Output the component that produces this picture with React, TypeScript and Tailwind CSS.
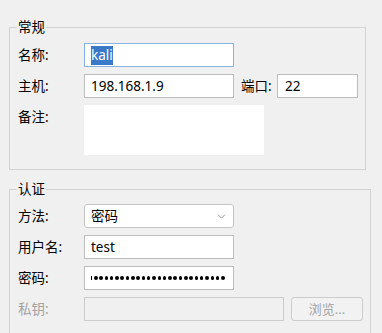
import { ChevronDown } from 'lucide-react';

const font = { fontFamily: '"Noto Sans", "Noto Sans CJK SC", sans-serif' };

function Row({ label, disabled, children }: { label: string; disabled?: boolean; children: React.ReactNode }) {
  return (
    <div className="flex items-center h-[24px]">
      <span className={`w-[67px] pl-[1px] ${disabled ? 'text-[#a3a3a3]' : 'text-black'}`}>{label}</span>
      {children}
    </div>
  );
}

function Field({ value, width, focused }: { value?: React.ReactNode; width: string; focused?: boolean }) {
  return (
    <div
      className={`${width} h-[24px] bg-white border flex items-center pl-[6px] ${
        focused ? 'border-[#86b3e3]' : 'border-[#bdbdbd]'
      }`}
    >
      {value}
    </div>
  );
}

export default function App() {
  const dots = Array.from({ length: 25 });

  return (
    <div className="w-[382px] h-[333px] bg-[#f0f0f0] overflow-hidden text-[13.5px] leading-[16px]" style={font}>
      <div className="pl-[9px] pt-[19px] flex flex-col gap-[11px]">
        {/* 常规 */}
        <fieldset className="w-[356px] border border-[#d3d3d3] px-[7px] pb-[14px]">
          <legend className="ml-0 px-[1px] h-[16px] leading-[16px]">常规</legend>
          <div className="flex flex-col gap-[7px] pt-[8px]">
            <Row label="名称:">
              <Field
                width="w-[150px]"
                focused
                value={<span className="bg-[#3a78c8] text-white leading-[19px]">kali</span>}
              />
            </Row>
            <Row label="主机:">
              <Field width="w-[150px]" value="198.168.1.9" />
              <span className="ml-[7px] w-[36px]">端口:</span>
              <div className="w-[81px] h-[24px] bg-white border border-[#bdbdbd] flex items-center pl-[7px]">22</div>
            </Row>
            <div className="flex items-start h-[50px]">
              <span className="w-[67px] pl-[1px] pt-[4px]">备注:</span>
              <div className="w-[180px] h-[50px] bg-white" />
            </div>
          </div>
        </fieldset>

        {/* 认证 */}
        <fieldset className="w-[362px] h-[170px] border border-[#d3d3d3] px-[7px]">
          <legend className="ml-0 px-[1px] h-[16px] leading-[16px]">认证</legend>
          <div className="flex flex-col gap-[7px] pt-[7px]">
            <Row label="方法:">
              <div className="w-[150px] h-[24px] bg-white border border-[#c4c4c4] rounded-[3px] flex items-center justify-between pl-[6px] pr-[5px]">
                <span>密码</span>
                <ChevronDown size={13} strokeWidth={1.2} className="text-[#5a5a5a]" />
              </div>
            </Row>
            <Row label="用户名:">
              <Field width="w-[150px]" value="test" />
            </Row>
            <Row label="密码:">
              <Field
                width="w-[150px]"
                value={
                  <span className="flex items-center">
                    <span className="w-[1px] h-[4px] bg-black mr-[2px]" />
                    {dots.map((_, i) => (
                      <span key={i} className="w-[3.5px] h-[3.5px] rounded-full bg-black mr-[1.8px]" />
                    ))}
                  </span>
                }
              />
            </Row>
            <Row label="私钥:" disabled>
              <div className="w-[200px] h-[24px] bg-[#f0f0f0] border border-[#cccccc]" />
              <div className="ml-[7px] w-[72px] h-[24px] border border-[#cccccc] rounded-[3px] bg-[#f2f2f2] flex items-center justify-center text-[#a3a3a3] text-[13px]">
                浏览...
              </div>
            </Row>
          </div>
        </fieldset>
      </div>
    </div>
  );
}
